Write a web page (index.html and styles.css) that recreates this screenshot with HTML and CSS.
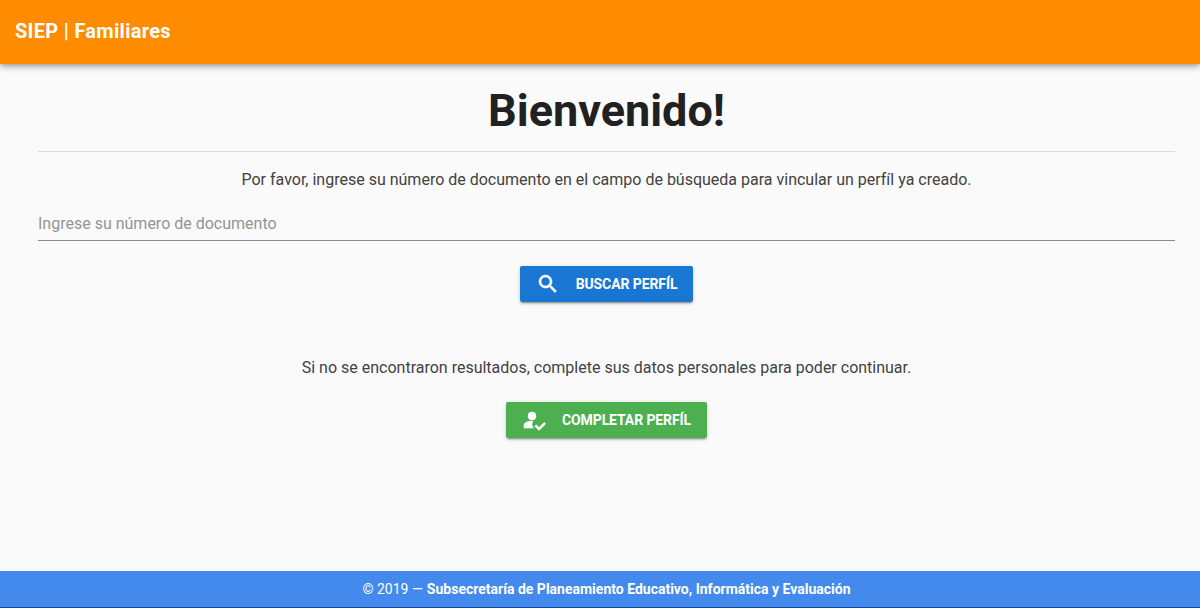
FILE: index.html
```html
<!DOCTYPE html>
<html>
<head>
	<meta charset="utf-8">
	<title>SIEP | Familiares</title>
	<link rel="stylesheet" href="styles.css">
</head>
<body>
<header class="toolbar">SIEP | Familiares</header>
<main class="content">
	<h1 class="title">Bienvenido!</h1>
	<hr class="divider">
	<p class="text">Por favor, ingrese su número de documento en el campo de búsqueda para vincular un perfíl ya creado.</p>
	<div class="field">
		<input class="field-input" type="text" placeholder="Ingrese su número de documento">
	</div>
	<div class="actions">
		<button class="btn btn-blue">
			<svg class="btn-icon" viewBox="0 0 24 24"><path d="M15.5 14h-.79l-.28-.27A6.471 6.471 0 0 0 16 9.5 6.5 6.5 0 1 0 9.5 16c1.61 0 3.09-.59 4.23-1.57l.27.28v.79l5 4.99L20.49 19l-4.99-5zm-6 0C7.01 14 5 11.99 5 9.5S7.01 5 9.5 5 14 7.01 14 9.5 11.99 14 9.5 14z"/></svg>
			<span>Buscar perfíl</span>
		</button>
	</div>
	<p class="text text-second">Si no se encontraron resultados, complete sus datos personales para poder continuar.</p>
	<div class="actions actions-second">
		<button class="btn btn-green">
			<svg class="btn-icon" viewBox="0 0 24 24"><circle cx="10" cy="8" r="4"/><path d="M10.67 13.02C10.45 13.01 10.23 13 10 13c-2.42 0-4.68.67-6.61 1.82-.88.52-1.39 1.5-1.39 2.53V20h9.26a6.96 6.96 0 0 1-.59-6.98z"/><path d="M22.3 14.3 17 19.6l-2.8-2.8-1.4 1.4 4.2 4.2 6.7-6.7z"/></svg>
			<span>Completar perfíl</span>
		</button>
	</div>
</main>
<footer class="footer">© 2019 — <strong>Subsecretaría de Planeamiento Educativo, Informática y Evaluación</strong></footer>
</body>
</html>
```
FILE: styles.css
```css
*{
	box-sizing: border-box;
}
html, body{
	height: 100%;
}
body{
	margin: 0;
	display: flex;
	flex-direction: column;
	background-color: #fafafa;
	font-family: Roboto, sans-serif;
	color: rgba(0,0,0,.87);
}
.toolbar{
	height: 64px;
	padding: 0 15px 2px;
	display: flex;
	align-items: center;
	flex-shrink: 0;
	background: #ff8c00;
	color: #fff;
	font-size: 20px;
	font-weight: 700;
	letter-spacing: .3px;
	box-shadow: 0 2px 4px -1px rgba(0,0,0,.2), 0 4px 5px 0 rgba(0,0,0,.14), 0 1px 10px 0 rgba(0,0,0,.12);
}
.content{
	flex: 1;
	padding: 0 25px 0 38px;
}
.title{
	margin: 0;
	padding-top: 16px;
	font-size: 45px;
	line-height: 61px;
	font-weight: 700;
	text-align: center;
	color: #212121;
}
.divider{
	margin: 10px 0 0;
	border: 0;
	border-top: 1px solid rgba(0,0,0,.12);
}
.text{
	margin: 18px 0 0;
	font-size: 16px;
	line-height: 20px;
	text-align: center;
	color: #424242;
}
.text-second{
	margin-top: 56px;
}
.field{
	margin-top: 15px;
	border-bottom: 1px solid #8a8a8a;
}
.field-input{
	display: block;
	width: 100%;
	height: 35px;
	padding: 1px 0 0;
	border: 0;
	outline: 0;
	background: transparent;
	font-family: Roboto, sans-serif;
	font-size: 16px;
}
.field-input::placeholder{
	color: #949494;
	opacity: 1;
}
.actions{
	display: flex;
	justify-content: center;
	margin-top: 25px;
}
.actions-second{
	margin-top: 24px;
}
.btn{
	height: 36px;
	padding: 0 15.5px;
	display: flex;
	align-items: center;
	border: 0;
	border-radius: 2px;
	color: #fff;
	font-family: Roboto, sans-serif;
	font-size: 14px;
	font-weight: 700;
	letter-spacing: -.1px;
	text-transform: uppercase;
	box-shadow: 0 3px 1px -2px rgba(0,0,0,.2), 0 2px 2px 0 rgba(0,0,0,.14), 0 1px 5px 0 rgba(0,0,0,.12);
}
.btn-blue{
	background: #1976d2;
}
.btn-green{
	background: #4caf50;
}
.btn-icon{
	width: 24px;
	height: 24px;
	margin-right: 16px;
	fill: #fff;
	stroke: #fff;
	stroke-width: .6;
}
.footer{
	height: 37px;
	flex-shrink: 0;
	display: flex;
	align-items: center;
	justify-content: center;
	gap: 4px;
	padding-left: 13px;
	background: #448aec;
	border-bottom: 1px solid #0d47a1;
	color: #fff;
	font-size: 14px;
}
.footer strong{
	font-weight: 700;
}
```
